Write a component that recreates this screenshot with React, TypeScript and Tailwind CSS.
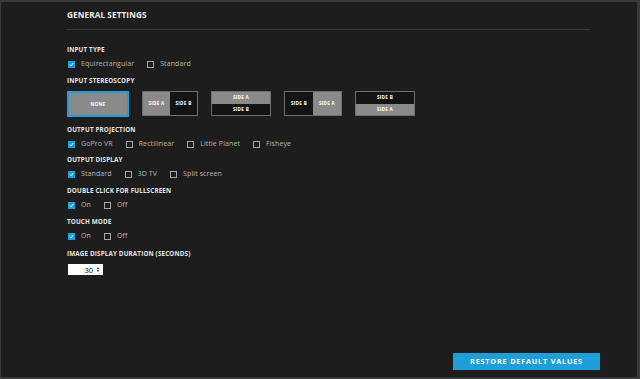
import React from "react";

const font = { fontFamily: '"Open Sans", "Liberation Sans", sans-serif' };

function Check({ checked, label }: { checked?: boolean; label: string }) {
  return (
    <div className="flex items-center gap-[6px]">
      {checked ? (
        <div className="w-[7px] h-[7px] bg-[#1e9fd9] flex items-center justify-center">
          <svg width="5" height="5" viewBox="0 0 5 5">
            <path d="M0.8 2.6 L2 3.8 L4.3 1" stroke="white" strokeWidth="0.9" fill="none" />
          </svg>
        </div>
      ) : (
        <div className="w-[7px] h-[7px] border border-[#a8a8a8]" />
      )}
      <span className="text-[7px] leading-[10px] tracking-[0.1px] text-[#b8b8b8]">{label}</span>
    </div>
  );
}

function Label({ children }: { children: React.ReactNode }) {
  return (
    <div className="text-[6.3px] leading-[10px] font-bold tracking-[0.15px] text-[#e6e6e6]">{children}</div>
  );
}

function Row({ children }: { children: React.ReactNode }) {
  return <div className="flex items-center gap-[13px] h-[10px] mt-[4px] pl-[1px]">{children}</div>;
}

const cellGray = "bg-[#8a8a8a] flex items-center justify-center text-[4.6px] font-bold text-white tracking-[0.3px]";
const cellDark = "bg-[#141414] flex items-center justify-center text-[4.6px] font-bold text-white tracking-[0.3px]";

export default function App() {
  return (
    <div
      style={font}
      className="w-[640px] h-[379px] bg-[#1d1d1d] border-t-2 border-b-2 border-l border-r-[3px] border-[#3a3a3a] flex flex-col"
    >
      <div className="pl-[66px] pr-[47px] flex flex-col">
        <div className="pt-[7px] h-[19px] text-[8.2px] leading-[12px] font-bold tracking-[0.1px] text-[#eeeeee]">
          GENERAL SETTINGS
        </div>
        <div className="mt-[8px] h-px bg-[#383838]" />
        <div className="mt-[15px]">
          <Label>INPUT TYPE</Label>
          <Row>
            <Check checked label="Equirectangular" />
            <Check label="Standard" />
          </Row>
        </div>
        <div className="mt-[7px]">
          <Label>INPUT STEREOSCOPY</Label>
          <div className="flex items-start gap-[13px] mt-[5px]">
            <div className="w-[62px] h-[26px] border-2 border-[#1e9fd9] bg-[#8a8a8a] flex items-center justify-center text-[4.6px] font-bold text-white tracking-[0.3px]">
              NONE
            </div>
            <div className="w-[56px] h-[25px] border border-[#6e6e6e] flex">
              <div className={`${cellGray} flex-1`}>SIDE A</div>
              <div className={`${cellDark} flex-1`}>SIDE B</div>
            </div>
            <div className="w-[60px] h-[25px] border border-[#6e6e6e] flex flex-col">
              <div className={`${cellGray} flex-1`}>SIDE A</div>
              <div className={`${cellDark} flex-1`}>SIDE B</div>
            </div>
            <div className="w-[58px] h-[25px] border border-[#6e6e6e] flex">
              <div className={`${cellDark} flex-1`}>SIDE B</div>
              <div className={`${cellGray} flex-1`}>SIDE A</div>
            </div>
            <div className="w-[60px] h-[25px] border border-[#6e6e6e] flex flex-col">
              <div className={`${cellDark} flex-1`}>SIDE B</div>
              <div className={`${cellGray} flex-1`}>SIDE A</div>
            </div>
          </div>
        </div>
        <div className="mt-[8px]">
          <Label>OUTPUT PROJECTION</Label>
          <Row>
            <Check checked label="GoPro VR" />
            <Check label="Rectilinear" />
            <Check label="Little Planet" />
            <Check label="Fisheye" />
          </Row>
        </div>
        <div className="mt-[6px]">
          <Label>OUTPUT DISPLAY</Label>
          <Row>
            <Check checked label="Standard" />
            <Check label="3D TV" />
            <Check label="Split screen" />
          </Row>
        </div>
        <div className="mt-[7px]">
          <Label>DOUBLE CLICK FOR FULLSCREEN</Label>
          <Row>
            <Check checked label="On" />
            <Check label="Off" />
          </Row>
        </div>
        <div className="mt-[7px]">
          <Label>TOUCH MODE</Label>
          <Row>
            <Check checked label="On" />
            <Check label="Off" />
          </Row>
        </div>
        <div className="mt-[8px]">
          <Label>IMAGE DISPLAY DURATION (SECONDS)</Label>
          <div className="mt-[5px] ml-[1px] w-[35px] h-[11px] bg-white flex items-center justify-end pr-[3px] gap-[3px]">
            <span className="text-[7.5px] leading-[10px] text-black">30</span>
            <svg width="4" height="7" viewBox="0 0 4 7">
              <path d="M0.5 3 L2 1 L3.5 3 Z M0.5 4 L2 6 L3.5 4 Z" fill="#444" />
            </svg>
          </div>
        </div>
      </div>
      <div className="mt-auto mb-[7px] flex justify-end pr-[37px]">
        <div className="w-[147px] h-[17px] bg-[#1e9fd9] flex items-center justify-center text-[7.2px] font-bold tracking-[0.85px] text-white">
          RESTORE DEFAULT VALUES
        </div>
      </div>
    </div>
  );
}
